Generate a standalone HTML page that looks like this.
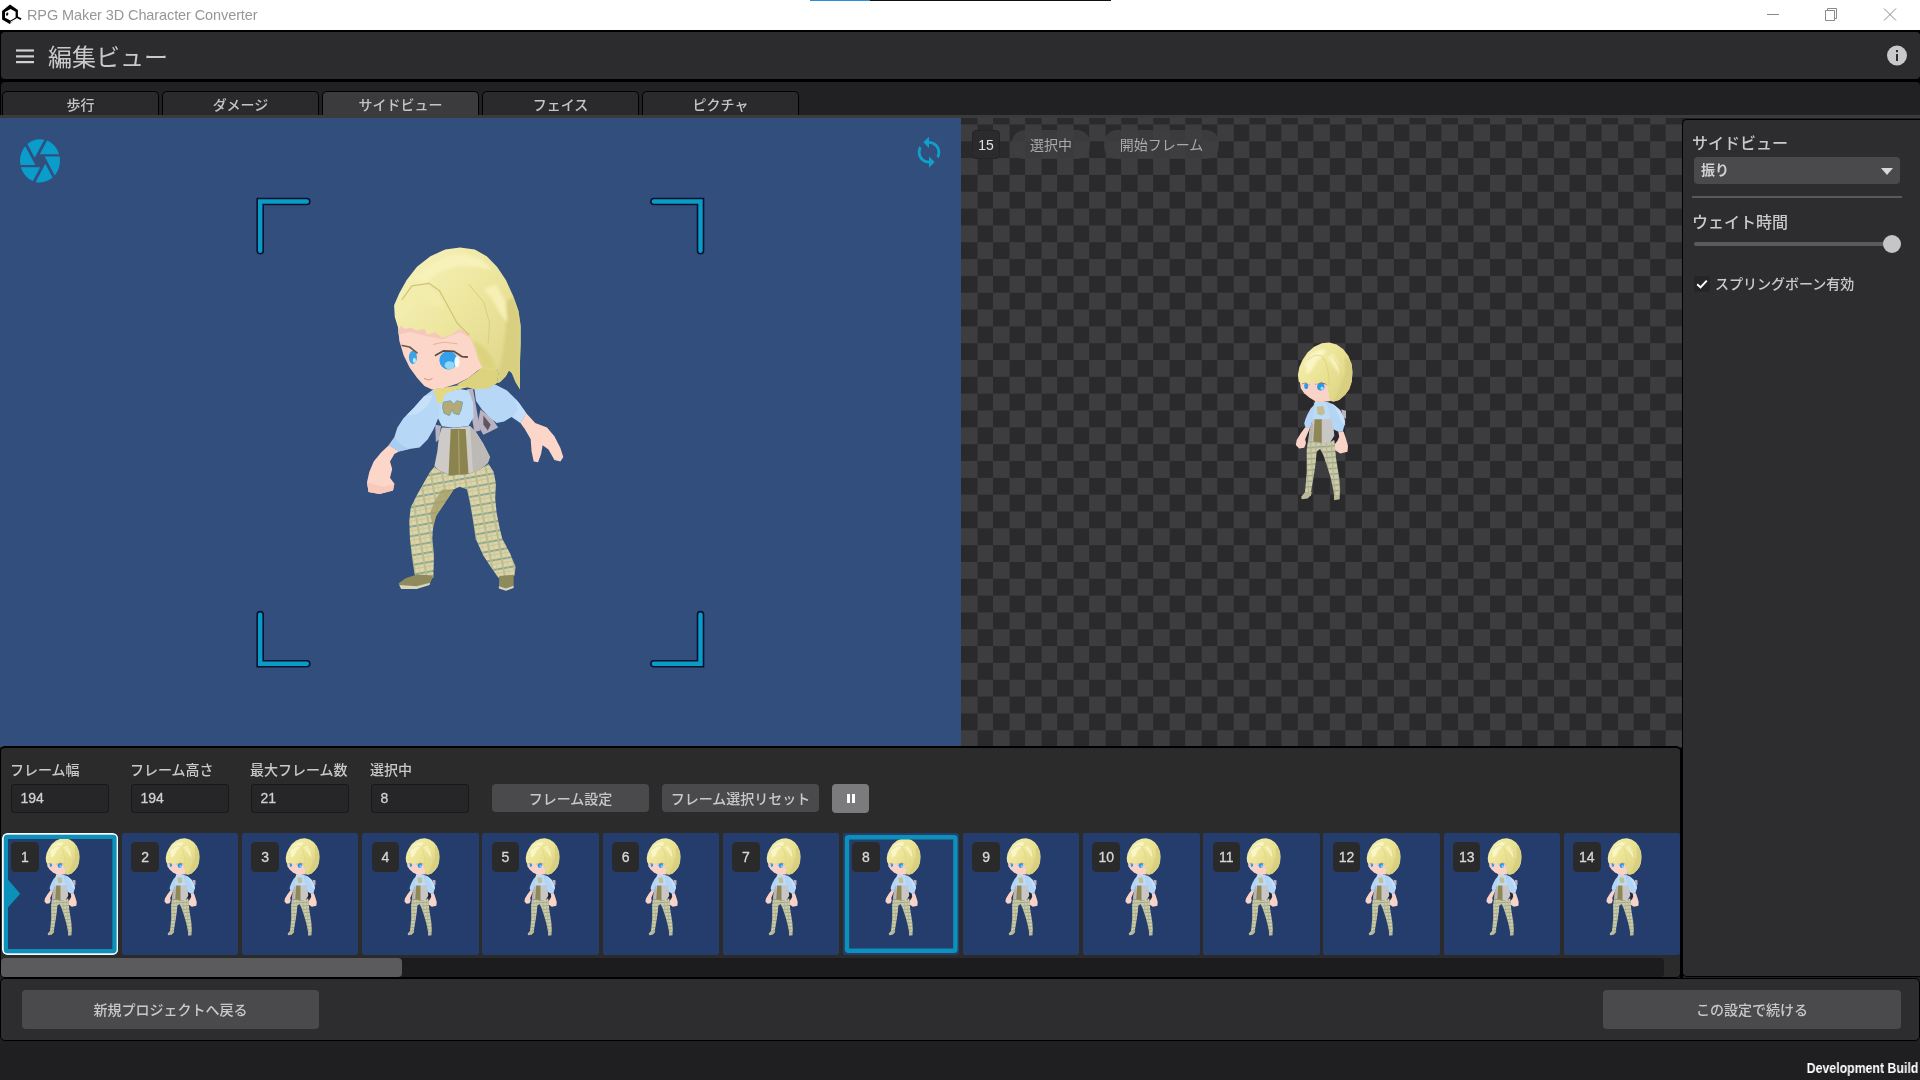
<!DOCTYPE html>
<html lang="ja">
<head>
<meta charset="utf-8">
<title>RPG Maker 3D Character Converter</title>
<style>
*{box-sizing:border-box;margin:0;padding:0}
html,body{width:1920px;height:1080px;overflow:hidden;background:#1f1e21}
body{position:relative;font-family:"Liberation Sans","Noto Sans CJK JP",sans-serif;color:#c9c9c9;font-size:14px}
.abs{position:absolute}
.jp{font-family:"Liberation Sans","Noto Sans CJK JP",sans-serif;font-weight:500}
#titlebar{left:0;top:0;width:1920px;height:30px;background:#fff}
#titlebar .ttl{left:27px;top:5px;font-size:14.5px;color:#97979a;letter-spacing:-0.1px;white-space:nowrap;line-height:20px}
#blk1{left:0;top:30px;width:1920px;height:88px;background:#000}
#header{left:1px;top:32px;width:1919px;height:47px;background:#2c2b2e;border-radius:4px}
#header .h1{left:47px;top:9.5px;font-size:24px;line-height:32px;color:#c9c9c9;white-space:nowrap;font-weight:400}
#tabband{left:1px;top:82px;width:1919px;height:33px;background:#212023;border-radius:4px 4px 0 0}
#tabline{left:0;top:115px;width:1920px;height:3px;background:#3b3a3d}
.tab{top:91px;width:157px;height:24px;background:#2a292b;border:1px solid #000;border-bottom:none;border-radius:5px 5px 0 0;text-align:center;font-size:14px;line-height:26.5px;color:#c4c4c4;white-space:nowrap}
.tab.sel{background:#3b3a3d}
#view3d{left:0;top:118px;width:961px;height:629px;background:#324e7c;overflow:hidden}
#checker{left:961px;top:118px;width:721px;height:629px;overflow:hidden;background-color:#2a292c;
 background-image:conic-gradient(#3d3c3f 0 25%,#2a292c 0 50%,#3d3c3f 0 75%,#2a292c 0);background-size:32.045px 33.66px;background-position:0px -10.4px}
#rpanel{left:1682px;top:119px;width:238px;height:858px;background:#2d2c2f;border:1px solid #000;border-right:none;border-radius:5px 0 0 5px}
#bpanel{left:0;top:746px;width:1681px;height:232px;background:#2b2b2c;border:1px solid #000;border-top-width:2px;border-radius:5px}
#footer{left:0;top:978px;width:1920px;height:63px;background:#2d2c2f;border:1px solid #000;border-radius:5px}
.btn{background:#4a494c;border-radius:4px;text-align:center;color:#c9c9c9;white-space:nowrap;font-size:14px}
.lbl{font-size:14px;line-height:20px;color:#c9c9c9;white-space:nowrap}
.inp{width:98px;height:29px;margin-top:-0.5px;background:#262527;border:1px solid #19181a;border-radius:3px;font-size:14px;line-height:27px;padding-left:8.5px;color:#cfcfcf;font-family:"Liberation Sans",sans-serif;-webkit-text-stroke:0.3px #cfcfcf}
.thumb{top:833px;width:116px;height:122px;background:#243d6c;border-radius:2px;overflow:hidden}
.badge{width:27.6px;height:29.6px;background:#2b2a2b;border-radius:4.5px;text-align:center;font-size:14px;line-height:30px;color:#d8d8d8;font-family:"Liberation Sans",sans-serif;-webkit-text-stroke:0.3px #d8d8d8}
</style>
</head>
<body>
<div id="root" class="abs" style="left:0;top:0;width:1920px;height:1080px;will-change:transform">
<!-- title bar -->
<div id="titlebar" class="abs">
  <div class="ttl abs">RPG Maker 3D Character Converter</div>
</div>
<div id="blk1" class="abs"></div>
<div id="header" class="abs">
  <div class="h1 abs jp">編集ビュー</div>
</div>
<div id="tabband" class="abs"></div>
<div id="tabline" class="abs"></div>
<div class="tab abs jp" style="left:2px">歩行</div>
<div class="tab abs jp" style="left:162px">ダメージ</div>
<div class="tab abs jp sel" style="left:322px">サイドビュー</div>
<div class="tab abs jp" style="left:482px">フェイス</div>
<div class="tab abs jp" style="left:642px">ピクチャ</div>

<div id="view3d" class="abs"></div>
<div id="checker" class="abs"></div>
<div id="rpanel" class="abs"></div>
<div id="bpanel" class="abs"></div>
<div id="footer" class="abs"></div>
<div class="abs" style="left:972px;top:130px;width:28px;height:29px;background:#2b2a2d;border:1px solid #242326;border-radius:4px;text-align:center;font-size:14px;line-height:28px;color:#e0e0e0;font-family:'Liberation Sans',sans-serif">15</div>
<div class="abs jp" style="left:1012px;top:130px;width:78px;height:29px;background:rgba(62,61,64,0.85);border-radius:13px;text-align:center;font-size:14px;line-height:31px;color:#aaa;white-space:nowrap;font-weight:400">選択中</div>
<div class="abs jp" style="left:1104px;top:130px;width:115px;height:29px;background:rgba(62,61,64,0.85);border-radius:13px;text-align:center;font-size:14px;line-height:31px;color:#aaa;white-space:nowrap;font-weight:400">開始フレーム</div>
<svg id="ov" class="abs" style="left:0;top:0;pointer-events:none" width="1920" height="1080" viewBox="0 0 1920 1080">
<!--STAND--><defs><pattern id="plaid2" width="5.2" height="5.6" patternUnits="userSpaceOnUse" patternTransform="rotate(-4)"><rect width="5.2" height="5.6" fill="#cfcba6"/><rect width="5.2" height="1.3" fill="#94a48c"/><rect width="1.2" height="5.6" fill="#b0b596"/></pattern>
<linearGradient id="hairg2" x1="0" y1="0" x2="1" y2="0.8"><stop offset="0" stop-color="#f5f0b6"/><stop offset="0.5" stop-color="#ece495"/><stop offset="1" stop-color="#dcd283"/></linearGradient>
<clipPath id="hairclip2"><polygon points="74.8,46.7 73.9,40.0 75.2,32.5 78.5,25.0 83.5,17.5 90.2,11.7 97.7,8.3 105.2,7.5 112.7,9.6 119.3,14.2 124.3,20.8 127.7,29.2 128.5,37.5 127.7,46.7 125.2,54.2 121.0,60.0 115.2,65.0 109.3,66.7 106.0,65.8 105.2,61.7 103.9,54.2 102.7,49.2 97.7,46.7 92.7,49.2 89.3,46.7 84.3,49.2 81.0,46.7 77.7,48.3"/></clipPath><filter id="soft2" x="-20%" y="-20%" width="140%" height="140%"><feGaussianBlur stdDeviation="0.9"/></filter>
<filter id="aa2" x="-5%" y="-5%" width="110%" height="110%"><feGaussianBlur stdDeviation="0.4"/></filter><g id="stand" filter="url(#aa2)">
<polygon points="117.2,74.6 122.0,75.7 122.0,83.8 118.9,82.1" fill="#b9b4c2" />
<polygon points="107.7,95.0 114.3,97.1 114.8,101.7 110.6,107.9 108.5,101.7" fill="#2a2830" />
<polygon points="114.3,96.5 119.5,96.5 121.8,103.3 124.0,110.8 123.5,116.7 116.2,118.5 111.2,115.2 110.2,110.0 113.5,105.8 115.2,101.7" fill="#f9d3c8" />
<polygon points="81.0,92.5 76.8,98.3 72.7,105.0 71.8,110.0 75.2,113.5 80.2,112.7 82.0,108.3 81.2,104.2 84.3,96.7 86.2,92.5" fill="#f9d3c8" />
<polygon points="83.9,105.7 97.7,108.3 106.0,107.1 110.3,104.8 111.2,113.3 112.0,123.3 113.7,133.3 115.3,143.3 116.2,155.0 115.7,160.2 110.2,161.0 109.3,155.0 106.8,143.3 102.7,130.0 99.3,120.0 96.0,114.0 92.7,116.7 91.8,126.7 90.2,138.3 88.5,148.3 87.0,156.8 80.8,158.5 81.8,148.3 82.7,136.7 82.7,125.0 82.7,115.0" fill="url(#plaid2)" />
<polygon points="80.8,157.5 87.8,156.7 87.0,160.2 83.5,163.5 77.7,164.3 77.2,161.7" fill="#bcb898" />
<polygon points="109.8,160.4 115.7,159.6 115.7,164.3 110.2,165.2" fill="#bcb898" />
<polygon points="87.7,78.3 106.0,78.3 109.3,90.0 110.3,100.8 106.0,107.5 97.7,108.5 84.3,106.0 85.2,96.7 87.7,88.3" fill="#c9c6c6" />
<polygon points="91.0,78.3 97.7,78.3 97.8,108.0 89.2,106.5" fill="#8f8856" />
<polygon points="85.3,96.7 87.7,88.3 89.3,89.2 88.1,105.4 84.5,105.7" fill="#b9b5ae" />
<polygon points="91.0,64.2 100.2,65.0 100.2,70.0 91.0,70.0" fill="#f2c3b6" />
<polygon points="90.6,67.1 103.1,66.7 106.7,80.0 106.0,84.2 88.1,84.2 87.5,79.2" fill="#bcdbf6" />
<polygon points="92.7,71.7 99.3,70.8 101.0,78.3 97.7,80.4 93.5,79.2" fill="#c2bd92" />
<polygon points="102.7,66.7 109.3,69.2 116.0,75.0 120.2,83.3 121.2,86.7 120.3,90.4 118.7,96.8 114.3,96.8 109.3,94.3 107.5,86.7 106.0,80.0" fill="#b4d5f5" />
<polygon points="109.3,69.2 116.0,75.0 120.2,83.3 121.2,90.4 117.7,87.5 113.5,77.5" fill="#c6e0f8" />
<polygon points="91.4,68.8 86.8,73.3 83.5,79.2 81.4,84.2 80.2,88.5 81.8,93.5 86.2,92.7 87.8,87.5 88.7,83.3 89.3,79.2" fill="#b4d5f5" />
<polygon points="75.6,45.0 76.8,53.3 80.2,58.3 85.2,62.5 91.0,66.0 99.3,66.8 106.3,66.0 105.3,58.3 104.1,51.7 102.8,46.7" fill="#f9d3c8" />
<ellipse cx="82.2" cy="51.0" rx="2.0" ry="3.1" fill="#2f9ce6"/>
<ellipse cx="96.8" cy="51.8" rx="3.7" ry="3.8" fill="#2a98e6"/>
<ellipse cx="98.1" cy="53.3" rx="1.6" ry="1.8" fill="#9fdcf9"/>
<polyline points="91.8,49.0 96.8,47.7 103.1,49.3" fill="none" stroke="#6a5a4c" stroke-width="0.9" stroke-linecap="round" stroke-linejoin="round" />
<polyline points="78.5,48.8 82.2,47.7 85.2,49.2" fill="none" stroke="#8a7a60" stroke-width="0.7" stroke-linecap="round" stroke-linejoin="round" />
<polygon points="74.8,46.7 73.9,40.0 75.2,32.5 78.5,25.0 83.5,17.5 90.2,11.7 97.7,8.3 105.2,7.5 112.7,9.6 119.3,14.2 124.3,20.8 127.7,29.2 128.5,37.5 127.7,46.7 125.2,54.2 121.0,60.0 115.2,65.0 109.3,66.7 106.0,65.8 105.2,61.7 103.9,54.2 102.7,49.2 97.7,46.7 92.7,49.2 89.3,46.7 84.3,49.2 81.0,46.7 77.7,48.3" fill="url(#hairg2)" />
<g clip-path="url(#hairclip2)" filter="url(#soft2)">
<polygon points="121.0,20.8 128.5,29.2 129.3,46.7 125.2,56.7 114.3,66.7 109.3,66.7 116.0,53.3 121.0,37.5" fill="#d9cf80" />
<polygon points="81.0,27.5 87.7,18.3 96.0,14.2 102.7,15.0 97.7,21.7 91.8,27.5 87.7,35.8 82.7,39.2" fill="#f9f5c4" />
<polygon points="102.7,21.7 109.3,19.2 114.3,27.5 116.0,40.0 111.0,33.3 106.8,27.5" fill="#f6f1b9" />
</g>
<polyline points="83.5,25.0 91.0,20.0 97.7,20.8 101.8,27.5 104.3,37.5 105.2,50.0" fill="none" stroke="#d3c978" stroke-width="0.6" stroke-linecap="round" stroke-linejoin="round" />
<polyline points="109.3,21.7 116.0,33.3 117.7,46.7 114.3,58.3" fill="none" stroke="#dcd283" stroke-width="0.6" stroke-linecap="round" stroke-linejoin="round" />
</g></defs><!--/STAND-->
<!--BIG--><defs><pattern id="plaid" width="11" height="9.5" patternUnits="userSpaceOnUse" patternTransform="rotate(-10)"><rect width="11" height="9.5" fill="#ddd5a8"/><rect y="0" width="11" height="2" fill="#8aa790"/><rect y="4.6" width="11" height="0.9" fill="#c3c095"/><rect x="0" width="2.2" height="9.5" fill="#b9bb90" opacity="0.9"/><rect x="5.5" width="0.9" height="9.5" fill="#c9c499"/></pattern><linearGradient id="hairg" x1="0" y1="0" x2="1" y2="1"><stop offset="0" stop-color="#f7f3c0"/><stop offset="0.45" stop-color="#eee7a0"/><stop offset="1" stop-color="#dcd386"/></linearGradient><filter id="soft" x="-20%" y="-20%" width="140%" height="140%"><feGaussianBlur stdDeviation="1.6"/></filter><clipPath id="hairclip"><polygon points="398.5,328.9 394.8,317.0 394.1,305.2 399.3,293.3 406.7,280.0 417.0,266.7 430.4,256.3 445.2,249.6 460.0,247.4 474.8,249.6 486.7,256.3 497.0,266.7 505.9,280.0 513.3,296.3 518.5,311.1 520.7,325.9 520.7,343.7 520.0,361.5 520.0,389.6 515.6,382.2 511.9,373.3 508.9,370.4 505.9,376.3 500.0,382.2 497.0,383.0 498.5,373.3 497.0,368.9 489.6,370.4 482.2,367.4 477.8,358.5 474.8,346.7 468.9,334.8 460.0,328.9 451.1,334.8 442.2,337.8 434.8,331.9 427.4,334.8 424.4,328.9 417.0,330.4 411.1,327.4 405.2,328.9 400.7,325.9"/></clipPath></defs>
<filter id="aa" x="-5%" y="-5%" width="110%" height="110%"><feGaussianBlur stdDeviation="0.45"/></filter><g id="bigchar" stroke-linejoin="round" filter="url(#aa)">
<polygon points="480.4,409.6 492.2,418.5 498.1,427.4 489.3,431.9 483.3,434.8 477.4,424.4" fill="#b8b2c1" />
<polygon points="483.3,415.6 490.7,424.4 487.8,430.4 483.3,424.4" fill="#5f5763" />
<polygon points="474.4,388.9 483.3,384.4 495.2,384.4 507.0,390.4 515.9,399.3 519.6,403.7 526.3,413.3 520.4,423.0 511.5,417.0 504.1,421.5 496.7,423.0 489.3,417.0 481.9,409.6 475.9,400.7" fill="#b7d7f6" />
<polygon points="515.9,399.3 519.6,403.7 526.3,413.3 520.4,423.0 513.0,416.3 517.4,409.6" fill="#c3def8" />
<polygon points="526.3,413.3 535.2,423.0 547.0,427.4 554.4,436.3 560.4,448.1 563.3,457.0 560.4,461.5 554.4,460.0 548.5,449.6 542.6,445.2 541.1,454.1 538.1,462.2 533.7,461.5 531.5,451.1 530.7,439.3 524.8,428.9 520.4,423.0" fill="#fbd6c9" />
<polygon points="434.4,466.7 438.9,470.4 450.7,475.6 468.5,474.1 480.4,468.9 488.5,463.7 493.7,471.9 495.9,483.7 495.2,498.5 496.7,513.3 499.6,528.1 502.6,540.0 475.9,540.0 473.0,520.7 470.0,503.0 467.0,489.6 459.6,486.7 453.7,489.6 444.8,503.0 435.9,516.3 433.0,528.1 432.2,540.0 410.0,540.0 409.3,520.7 410.7,507.4 416.7,495.6 424.1,482.2 430.0,471.9" fill="url(#plaid)" />
<polygon points="441.9,489.6 453.7,489.6 444.8,503.0 435.9,516.3 433.0,528.1 430.0,513.3 434.4,501.5" fill="#a8a068" opacity="0.8"/>
<polygon points="410.0,539.6 411.8,555.6 414.4,573.3 416.2,577.8 433.3,577.8 434.0,555.6 432.4,539.6" fill="url(#plaid)" />
<polygon points="476.0,539.6 483.3,555.6 492.2,568.9 498.4,577.8 514.4,576.0 515.6,566.7 510.0,553.3 502.7,539.6" fill="url(#plaid)" />
<polygon points="416.7,574.4 433.3,575.6 430.4,582.7 416.7,588.4 401.6,588.4 398.4,583.6 405.6,578.2" fill="#8f8a5c" />
<polygon points="399.3,584.9 416.7,586.2 430.0,582.7 429.6,584.9 416.7,588.9 401.1,588.9" fill="#d9d6bc" />
<polygon points="499.3,576.0 513.6,574.7 513.6,587.1 506.0,590.4 498.9,588.0" fill="#8f8a5c" />
<polygon points="498.9,586.2 506.0,588.4 513.6,585.8 513.6,588.0 506.0,590.7 498.9,588.4" fill="#d9d6bc" />
<polygon points="441.9,427.4 453.7,428.1 470.0,425.9 475.9,431.9 483.3,443.7 490.0,457.0 487.8,463.0 480.4,468.9 468.5,474.1 450.7,475.6 438.9,470.4 434.4,465.9 437.4,451.1 438.9,436.3" fill="#cdcac7" />
<polygon points="470.0,425.9 475.9,431.9 483.3,443.7 490.0,457.0 487.8,463.0 480.4,468.9 473.0,472.6 471.5,446.7" fill="#bdb9b4" />
<polygon points="450.7,428.9 465.6,428.9 468.5,474.1 448.5,475.6" fill="#8c8450" />
<polyline points="458.6,430.4 459.3,474.8" fill="none" stroke="#b3aa78" stroke-width="0.9" stroke-linecap="round" stroke-linejoin="round" />
<polygon points="467.0,388.9 473.0,388.9 477.4,414.1 480.4,430.4 474.4,431.9 471.5,415.6" fill="#b8b2c1" />
<polygon points="435.2,424.4 441.1,425.9 438.9,439.3 435.9,442.2" fill="#b8b2c1" />
<polygon points="437.4,394.8 444.8,391.9 459.6,388.9 468.5,390.4 473.0,402.2 473.7,417.0 468.5,425.9 453.7,427.7 441.9,426.2 437.4,417.0" fill="#bcdcf7" />
<polygon points="443.3,402.2 450.7,400.7 453.7,404.4 456.7,400.7 462.6,402.2 461.1,409.6 458.9,414.8 453.7,413.3 452.2,409.6 449.3,415.6 444.1,413.3 442.6,407.4" fill="#b5aa76" stroke="#6a9c9c" stroke-width="0.8"/>
<polygon points="433.7,388.9 424.1,396.3 413.7,408.1 403.3,418.5 397.4,427.4 394.1,437.8 388.8,445.2 398.9,451.4 409.3,448.9 419.6,447.4 427.8,439.3 433.7,428.9 438.1,418.5 439.6,406.7 438.1,394.8" fill="#b7d7f6" />
<polygon points="394.1,437.8 388.8,445.2 398.9,451.4 409.3,448.9 401.9,445.2" fill="#a9cdf1" />
<polygon points="424.1,396.3 413.7,408.1 406.3,415.6 416.7,414.1 427.0,406.7 433.0,394.8" fill="#c6e0f9" />
<polygon points="388.8,445.2 381.1,452.6 373.7,461.5 369.3,471.9 367.0,482.2 368.5,491.9 379.6,494.1 393.0,490.4 394.4,483.7 390.0,477.8 392.2,468.9 390.0,461.5 394.4,454.1 398.9,451.4" fill="#fbd6c9" />
<polygon points="367.0,482.2 368.5,491.9 379.6,494.1 393.0,490.4 394.4,483.7 384.1,486.7 372.2,483.7" fill="#f9c9bc" />
<polygon points="433.0,388.9 444.8,387.4 462.6,384.4 471.5,381.5 467.0,387.4 453.7,390.4 444.8,394.1 441.9,403.7 437.4,402.2 435.2,394.8" fill="#e4d982" />
<polygon points="397.8,323.0 399.3,340.7 403.7,355.6 409.6,367.4 417.0,377.8 424.4,385.9 431.9,389.6 443.7,388.1 457.0,383.7 468.9,377.8 477.8,370.4 483.7,367.4 479.3,358.5 474.8,343.7 468.9,331.9 460.0,324.4" fill="#fbd6c9" />
<polygon points="397.8,323.0 398.5,334.8 409.6,331.9 427.4,336.3 442.2,339.3 460.0,331.9 470.4,337.8 476.3,352.6 482.2,367.4 483.7,367.4 479.3,358.5 474.8,343.7 468.9,331.9 460.0,324.4" fill="#f6c8bb" />
<ellipse cx="412.9" cy="357.3" rx="4" ry="6.6" fill="#3aa3ea"/>
<ellipse cx="414.4" cy="360.3" rx="1.6" ry="2.6" fill="#bfe6fb"/>
<ellipse cx="448.4" cy="360.3" rx="9" ry="9.2" fill="#34a0ea"/>
<ellipse cx="449.6" cy="365.2" rx="5" ry="4" fill="#8fd6f8"/>
<ellipse cx="457.0" cy="361.8" rx="2.6" ry="5.5" fill="#f4fbff"/>
<polyline points="435.6,355.3 443.7,350.8 454.1,351.4 462.2,356.7 467.1,357.0" fill="none" stroke="#5e4e44" stroke-width="1.8" stroke-linecap="round" stroke-linejoin="round" />
<polyline points="402.2,345.5 409.6,347.0 417.0,352.9" fill="none" stroke="#6a5a4c" stroke-width="1.6" stroke-linecap="round" stroke-linejoin="round" />
<polyline points="433.3,344.4 443.7,342.2 457.0,343.7" fill="none" stroke="#dcb391" stroke-width="0.9" stroke-linecap="round" stroke-linejoin="round" />
<polyline points="424.4,378.5 428.6,380.1 432.1,378.7" fill="none" stroke="#c98a7a" stroke-width="0.9" stroke-linecap="round" stroke-linejoin="round" />
<polygon points="468.9,377.8 482.2,367.4 497.0,368.9 498.5,373.3 497.0,383.0 489.6,388.1 474.8,389.6 457.0,384.4" fill="#ddd37f" />
<polygon points="398.5,328.9 394.8,317.0 394.1,305.2 399.3,293.3 406.7,280.0 417.0,266.7 430.4,256.3 445.2,249.6 460.0,247.4 474.8,249.6 486.7,256.3 497.0,266.7 505.9,280.0 513.3,296.3 518.5,311.1 520.7,325.9 520.7,343.7 520.0,361.5 520.0,389.6 515.6,382.2 511.9,373.3 508.9,370.4 505.9,376.3 500.0,382.2 497.0,383.0 498.5,373.3 497.0,368.9 489.6,370.4 482.2,367.4 477.8,358.5 474.8,346.7 468.9,334.8 460.0,328.9 451.1,334.8 442.2,337.8 434.8,331.9 427.4,334.8 424.4,328.9 417.0,330.4 411.1,327.4 405.2,328.9 400.7,325.9" fill="url(#hairg)" />
<g clip-path="url(#hairclip)" filter="url(#soft)">
<polygon points="505.9,302.2 513.3,296.3 518.5,311.1 520.7,325.9 520.7,343.7 520.0,361.5 520.0,389.6 515.6,382.2 511.9,373.3 508.9,370.4 505.9,376.3 500.0,382.2 497.0,383.0 498.5,373.3 503.0,352.6 505.9,328.9" fill="#d8cf80" />
<polygon points="477.8,358.5 474.8,346.7 471.9,339.3 483.7,346.7 492.6,358.5 497.0,368.9 489.6,370.4 482.2,367.4" fill="#ddd37f" />
<polygon points="414.1,278.5 428.9,265.2 445.2,256.3 463.0,254.1 480.7,259.3 492.6,269.6 474.8,266.7 457.0,265.9 439.3,271.9 424.4,283.0" fill="#f7f2ba" />
<polygon points="402.2,302.2 412.6,288.9 427.4,287.4 439.3,296.3 445.2,309.6 436.3,305.2 424.4,302.2 412.6,305.2 403.7,314.1" fill="#f3edac" />
<polygon points="483.7,288.9 495.6,284.4 505.9,302.2 507.4,323.0 498.5,311.1 492.6,299.3" fill="#f6f0b6" />
</g>
<polyline points="402.2,299.3 411.9,285.9 428.9,283.3 439.3,290.4 446.7,303.7 457.0,323.0 468.9,334.8" fill="none" stroke="#cfc572" stroke-width="1.2" stroke-linecap="round" stroke-linejoin="round" />
<polyline points="468.9,284.4 483.7,302.2 489.6,323.0 488.1,343.7" fill="none" stroke="#d9cf7c" stroke-width="1.0" stroke-linecap="round" stroke-linejoin="round" />
</g><!--/BIG-->
<use href="#stand" transform="translate(1224,335)"/>
<path d="M810 0.5H870" stroke="#2a8fd6" stroke-width="1"/><path d="M870 0.5H1111" stroke="#111" stroke-width="1"/>

<g id="appicon"><polygon points="10,4.6 17.9,10 17.9,16.4 21.6,18.5 20.6,20.1 16.9,18 9.7,24.1 2.1,19.4 2.1,11" fill="#000"/><polygon points="5,12 10.6,9 15.6,11.7 15.6,17.6 10.6,20.4 5,17.7" fill="#fff"/><polygon points="10.8,21.5 16.4,18.4 16.6,18.9 10.4,23.2" fill="#fff"/><ellipse cx="7.2" cy="14.2" rx="1.1" ry="1.7" fill="#111" transform="rotate(20 7.2 14.2)"/></g>
<g stroke="#8a8a8a" stroke-width="1" fill="none"><path d="M1767 14.5H1779"/><path d="M1825.5 10.5H1834.5V20.5H1825.5Z"/><path d="M1827.5 10.5V8.5H1836.5V18.5H1834.5"/><path d="M1884 8.5L1896 20.5M1896 8.5L1884 20.5"/></g>
<g fill="#d0d0d0"><rect x="16" y="49.4" width="18" height="2.2"/><rect x="16" y="55.3" width="18" height="2.2"/><rect x="16" y="61" width="18" height="2.2"/></g>
<circle cx="1897" cy="55.5" r="10" fill="#c9c8cb"/><rect x="1896" y="50" width="2" height="2.2" fill="#2c2b2e"/><rect x="1896" y="54" width="2" height="7" fill="#2c2b2e"/>
<g transform="translate(16,134.8) scale(2,2.165)" fill="#0a9dcb"><path d="M9.4 10.5l4.77-8.26C13.47 2.09 12.75 2 12 2c-2.4 0-4.6.85-6.32 2.25l3.66 6.35.06-.1zM21.54 9c-.92-2.92-3.15-5.26-6-6.34L11.88 9h9.66zm.26 1h-7.49l.29.5 4.76 8.25C21 16.97 22 14.61 22 12c0-.69-.07-1.35-.2-2zM8.54 12l-3.9-6.75C3.01 7.03 2 9.39 2 12c0 .69.07 1.35.2 2h7.49l-1.15-2zm-6.080 3c.92 2.92 3.15 5.26 6 6.34L12.12 15H2.46zm11.27 0l-3.9 6.76c.7.15 1.42.24 2.17.24 2.4 0 4.6-.85 6.32-2.25l-3.66-6.35-.93 1.6z"/></g>
<g transform="translate(912.08,135.28) scale(1.41)" fill="#0fa0cc"><path d="M12 4V1L8 5l4 4V6c3.31 0 6 2.690 6 6 0 1.010-.25 1.970-.7 2.800l1.460 1.460C19.540 15.030 20 13.570 20 12c0-4.420-3.580-8-8-8zm0 14c-3.310 0-6-2.690-6-6 0-1.010.25-1.970.7-2.800L5.240 7.740C4.460 8.970 4 10.430 4 12c0 4.420 3.580 8 8 8v3l4-4-4-4v3z"/></g>
<path d="M306.8 201.5H260.2V250.7 M653.9 201.5H700.5V250.7 M260.2 614.5999999999999V663.8H306.8 M700.5 614.5999999999999V663.8H653.9" fill="none" stroke="#06122f" stroke-width="7.6" stroke-linecap="round" stroke-linejoin="miter"/>
<path d="M306.8 201.5H260.2V250.7 M653.9 201.5H700.5V250.7 M260.2 614.5999999999999V663.8H306.8 M700.5 614.5999999999999V663.8H653.9" fill="none" stroke="#0a9bc6" stroke-width="4.4" stroke-linecap="round" stroke-linejoin="miter"/>
</svg>
<!-- bottom panel -->
<div class="lbl abs jp" style="left:10px;top:760px">フレーム幅</div>
<div class="inp abs" style="left:11px;top:784px">194</div>
<div class="lbl abs jp" style="left:130px;top:760px">フレーム高さ</div>
<div class="inp abs" style="left:131px;top:784px">194</div>
<div class="lbl abs jp" style="left:250px;top:760px">最大フレーム数</div>
<div class="inp abs" style="left:251px;top:784px">21</div>
<div class="lbl abs jp" style="left:370px;top:760px">選択中</div>
<div class="inp abs" style="left:371px;top:784px">8</div>
<div class="btn abs jp" style="left:492px;top:784px;width:157px;height:28px;line-height:30px">フレーム設定</div>
<div class="btn abs jp" style="left:662px;top:784px;width:157px;height:28px;line-height:30px">フレーム選択リセット</div>
<div class="abs" style="left:832px;top:784px;width:37px;height:29px;background:#7b7a7d;border-radius:4px"><div class="abs" style="left:15px;top:10px;width:3px;height:9px;background:#fff"></div><div class="abs" style="left:20px;top:10px;width:3px;height:9px;background:#fff"></div></div>
<div class="thumb abs" style="left:1.80px;width:116.40px;border-radius:5px"><svg class="abs" style="left:0;top:0" width="116" height="122" viewBox="0 0 116 122"><use href="#stand" transform="translate(-2,0.5) scale(0.6186)"/></svg><svg class="abs" style="left:0;top:0" width="117" height="122" viewBox="0 0 117 122"><rect x="3.75" y="3.75" width="108.9" height="114.5" rx="2.5" fill="none" stroke="#0b91ba" stroke-width="4.6"/><rect x="0.9" y="0.9" width="114.6" height="120.2" rx="4.5" fill="none" stroke="#f2fbfe" stroke-width="1.8"/><polygon points="6,46.5 18.2,60.8 6,74.5" fill="#0b91ba"/></svg><div class="badge abs" style="left:9.3px;top:9.1px">1</div></div>
<div class="thumb abs" style="left:121.95px;width:116.40px"><svg class="abs" style="left:0;top:0" width="116" height="122" viewBox="0 0 116 122"><use href="#stand" transform="translate(-2,0.5) scale(0.6186)"/></svg><div class="badge abs" style="left:9.3px;top:9.1px">2</div></div>
<div class="thumb abs" style="left:242.10px;width:116.40px"><svg class="abs" style="left:0;top:0" width="116" height="122" viewBox="0 0 116 122"><use href="#stand" transform="translate(-2,0.5) scale(0.6186)"/></svg><div class="badge abs" style="left:9.3px;top:9.1px">3</div></div>
<div class="thumb abs" style="left:362.25px;width:116.40px"><svg class="abs" style="left:0;top:0" width="116" height="122" viewBox="0 0 116 122"><use href="#stand" transform="translate(-2,0.5) scale(0.6186)"/></svg><div class="badge abs" style="left:9.3px;top:9.1px">4</div></div>
<div class="thumb abs" style="left:482.40px;width:116.40px"><svg class="abs" style="left:0;top:0" width="116" height="122" viewBox="0 0 116 122"><use href="#stand" transform="translate(-2,0.5) scale(0.6186)"/></svg><div class="badge abs" style="left:9.3px;top:9.1px">5</div></div>
<div class="thumb abs" style="left:602.55px;width:116.40px"><svg class="abs" style="left:0;top:0" width="116" height="122" viewBox="0 0 116 122"><use href="#stand" transform="translate(-2,0.5) scale(0.6186)"/></svg><div class="badge abs" style="left:9.3px;top:9.1px">6</div></div>
<div class="thumb abs" style="left:722.70px;width:116.40px"><svg class="abs" style="left:0;top:0" width="116" height="122" viewBox="0 0 116 122"><use href="#stand" transform="translate(-2,0.5) scale(0.6186)"/></svg><div class="badge abs" style="left:9.3px;top:9.1px">7</div></div>
<div class="thumb abs" style="left:842.85px;width:116.40px"><svg class="abs" style="left:0;top:0" width="116" height="122" viewBox="0 0 116 122"><use href="#stand" transform="translate(-2,0.5) scale(0.6186)"/></svg><svg class="abs" style="left:0;top:0" width="117" height="122" viewBox="0 0 117 122"><rect x="4" y="4.3" width="108.4" height="113.4" rx="1.2" fill="none" stroke="#0b91ba" stroke-width="4.4"/></svg><div class="badge abs" style="left:9.3px;top:9.1px">8</div></div>
<div class="thumb abs" style="left:963.00px;width:116.40px"><svg class="abs" style="left:0;top:0" width="116" height="122" viewBox="0 0 116 122"><use href="#stand" transform="translate(-2,0.5) scale(0.6186)"/></svg><div class="badge abs" style="left:9.3px;top:9.1px">9</div></div>
<div class="thumb abs" style="left:1083.15px;width:116.40px"><svg class="abs" style="left:0;top:0" width="116" height="122" viewBox="0 0 116 122"><use href="#stand" transform="translate(-2,0.5) scale(0.6186)"/></svg><div class="badge abs" style="left:9.3px;top:9.1px">10</div></div>
<div class="thumb abs" style="left:1203.30px;width:116.40px"><svg class="abs" style="left:0;top:0" width="116" height="122" viewBox="0 0 116 122"><use href="#stand" transform="translate(-2,0.5) scale(0.6186)"/></svg><div class="badge abs" style="left:9.3px;top:9.1px">11</div></div>
<div class="thumb abs" style="left:1323.45px;width:116.40px"><svg class="abs" style="left:0;top:0" width="116" height="122" viewBox="0 0 116 122"><use href="#stand" transform="translate(-2,0.5) scale(0.6186)"/></svg><div class="badge abs" style="left:9.3px;top:9.1px">12</div></div>
<div class="thumb abs" style="left:1443.60px;width:116.40px"><svg class="abs" style="left:0;top:0" width="116" height="122" viewBox="0 0 116 122"><use href="#stand" transform="translate(-2,0.5) scale(0.6186)"/></svg><div class="badge abs" style="left:9.3px;top:9.1px">13</div></div>
<div class="thumb abs" style="left:1563.75px;width:116.25px"><svg class="abs" style="left:0;top:0" width="116" height="122" viewBox="0 0 116 122"><use href="#stand" transform="translate(-2,0.5) scale(0.6186)"/></svg><div class="badge abs" style="left:9.3px;top:9.1px">14</div></div>
<div class="abs" style="left:1px;top:958px;width:1663px;height:19px;background:#1c1b1d;border-radius:4px"></div>
<div class="abs" style="left:1px;top:958px;width:401px;height:19px;background:#5b5a5c;border-radius:4px"></div>
<div class="abs" style="left:1680px;top:748px;width:3px;height:230px;background:#000"></div>
<!-- right panel -->
<div class="abs jp" style="left:1692px;top:132px;font-size:16px;line-height:24px;white-space:nowrap;color:#cacaca">サイドビュー</div>
<div class="abs" style="left:1694px;top:157px;width:206px;height:27px;background:#4a494c;border-radius:4px"><div class="abs jp" style="left:7px;top:3px;font-size:14px;line-height:21px;color:#d2d2d2;font-weight:700">振り</div><div class="abs" style="left:187px;top:11px;width:0;height:0;border-top:7px solid #d8d8d8;border-left:6px solid transparent;border-right:6px solid transparent"></div></div>
<div class="abs" style="left:1692px;top:196px;width:210px;height:2px;background:#59585b"></div>
<div class="abs jp" style="left:1692px;top:211px;font-size:16px;line-height:24px;white-space:nowrap;color:#cacaca">ウェイト時間</div>
<div class="abs" style="left:1694px;top:242px;width:198px;height:4px;background:#5b5a5d;border-radius:2px"></div>
<div class="abs" style="left:1883px;top:235px;width:18px;height:18px;background:#c5c4c7;border-radius:9px"></div>
<div class="abs" style="left:1694px;top:276px;width:16px;height:16px;background:#252427;border-radius:3px"><svg class="abs" style="left:0;top:0" width="16" height="16" viewBox="0 0 16 16"><path d="M3.2 8.3 L6.5 11.4 L12.8 4.6" fill="none" stroke="#fff" stroke-width="2"/></svg></div>
<div class="abs jp" style="left:1715px;top:274px;font-size:14px;line-height:20px;white-space:nowrap;color:#cacaca">スプリングボーン有効</div>
<!-- footer -->
<div class="btn abs jp" style="left:22px;top:990px;width:297px;height:39px;line-height:40px">新規プロジェクトへ戻る</div>
<div class="btn abs jp" style="left:1603px;top:990px;width:298px;height:39px;line-height:40px">この設定で続ける</div>
<div class="abs" style="right:2px;top:1058px;font-size:14.5px;line-height:20px;font-weight:700;color:#fff;white-space:nowrap;transform:scaleX(0.85);transform-origin:right center;font-family:'Liberation Sans',sans-serif">Development Build</div>
</div>
</body>
</html>
